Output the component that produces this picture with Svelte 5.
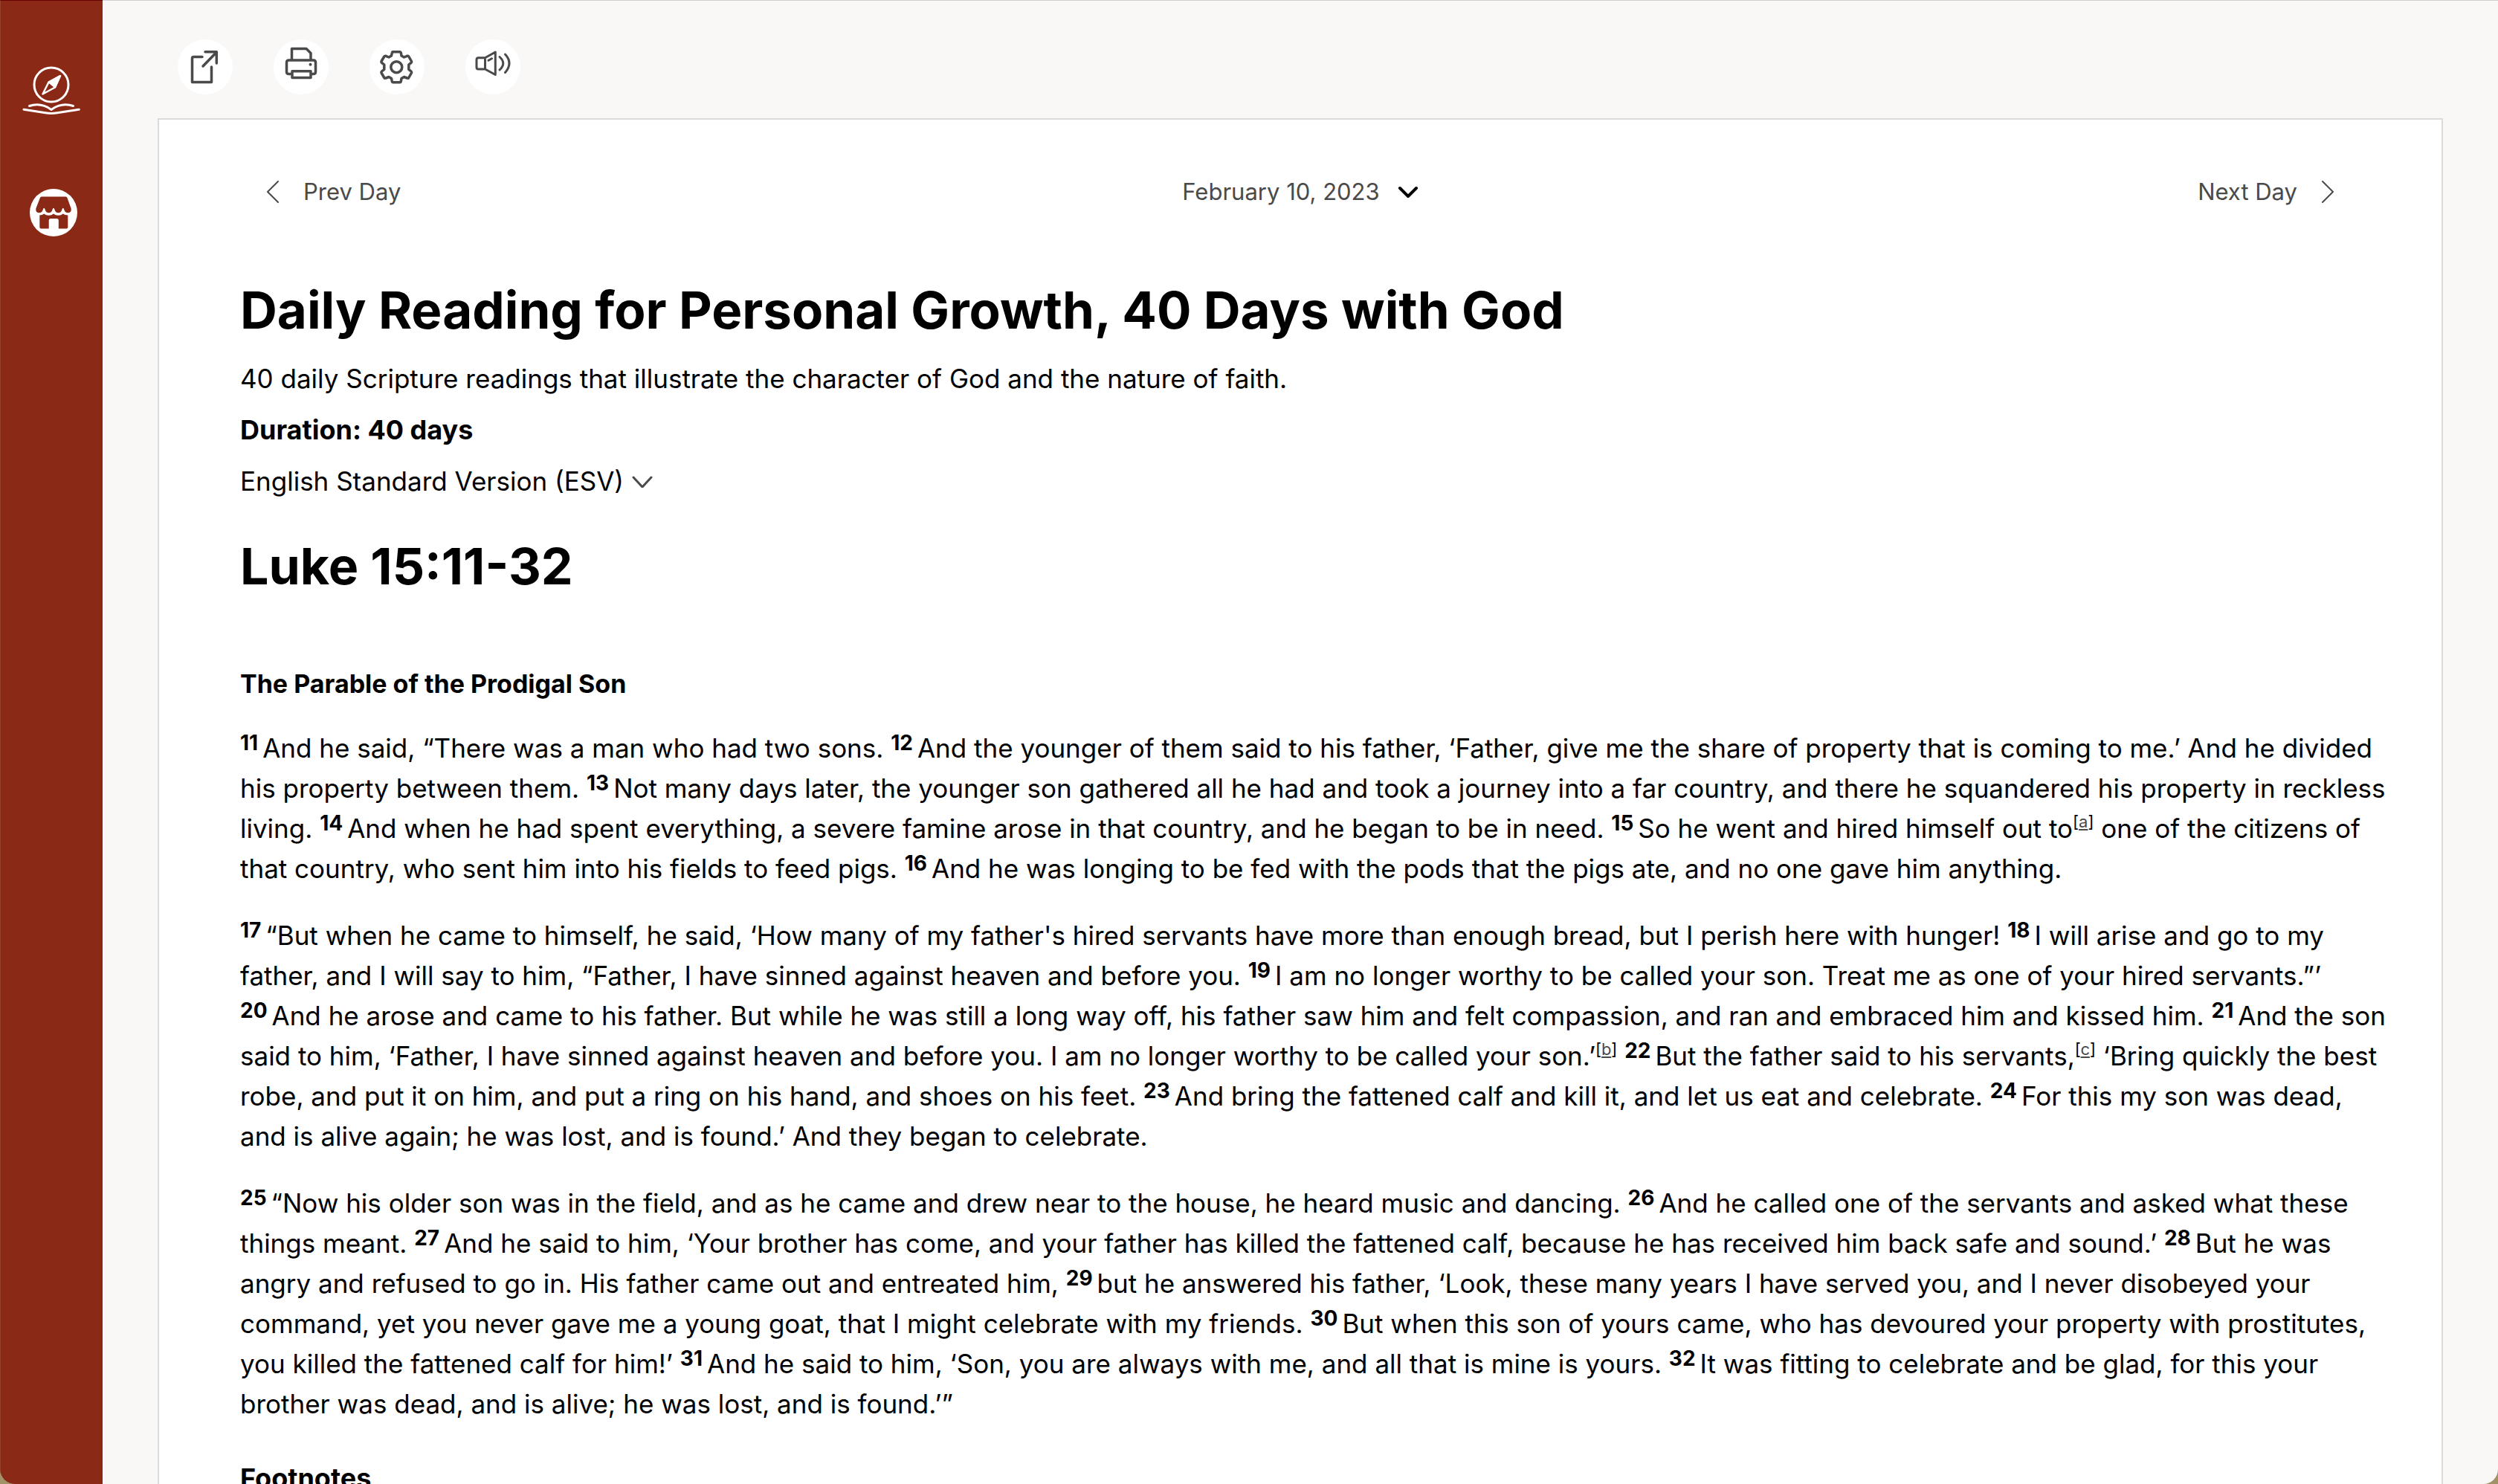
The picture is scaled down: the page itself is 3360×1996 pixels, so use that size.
<script>
  const paragraphs = [
    `{11} And he said, “There was a man who had two sons. {12} And the younger of them said to his father, ‘Father, give me the share of property that is coming to me.’ And he divided his property between them. {13} Not many days later, the younger son gathered all he had and took a journey into a far country, and there he squandered his property in reckless living. {14} And when he had spent everything, a severe famine arose in that country, and he began to be in need. {15} So he went and hired himself out to[a] one of the citizens of that country, who sent him into his fields to feed pigs. {16} And he was longing to be fed with the pods that the pigs ate, and no one gave him anything.`,
    `{17} “But when he came to himself, he said, ‘How many of my father's hired servants have more than enough bread, but I perish here with hunger! {18} I will arise and go to my father, and I will say to him, “Father, I have sinned against heaven and before you. {19} I am no longer worthy to be called your son. Treat me as one of your hired servants.”’ {20} And he arose and came to his father. But while he was still a long way off, his father saw him and felt compassion, and ran and embraced him and kissed him. {21} And the son said to him, ‘Father, I have sinned against heaven and before you. I am no longer worthy to be called your son.’[b] {22} But the father said to his servants,[c] ‘Bring quickly the best robe, and put it on him, and put a ring on his hand, and shoes on his feet. {23} And bring the fattened calf and kill it, and let us eat and celebrate. {24} For this my son was dead, and is alive again; he was lost, and is found.’ And they began to celebrate.`,
    `{25} “Now his older son was in the field, and as he came and drew near to the house, he heard music and dancing. {26} And he called one of the servants and asked what these things meant. {27} And he said to him, ‘Your brother has come, and your father has killed the fattened calf, because he has received him back safe and sound.’ {28} But he was angry and refused to go in. His father came out and entreated him, {29} but he answered his father, ‘Look, these many years I have served you, and I never disobeyed your command, yet you never gave me a young goat, that I might celebrate with my friends. {30} But when this son of yours came, who has devoured your property with prostitutes, you killed the fattened calf for him!’ {31} And he said to him, ‘Son, you are always with me, and all that is mine is yours. {32} It was fitting to celebrate and be glad, for this your brother was dead, and is alive; he was lost, and is found.’”`,
  ];

  // {n} marks a verse number, [x] a footnote reference
  function parse(text) {
    return text
      .split(/(\{\d+\} |\[[a-z]\])/)
      .filter(Boolean)
      .map((part) => {
        if (/^\{\d+\} $/.test(part)) return { kind: 'verse', value: part.slice(1, -2) };
        if (/^\[[a-z]\]$/.test(part)) return { kind: 'note', value: part[1] };
        return { kind: 'text', value: part };
      });
  }

  const passage = paragraphs.map(parse);
</script>

<div class="window">
  <nav class="sidebar" aria-label="Main">
    <a class="side-link" href="#explore" aria-label="Explore">
      <svg viewBox="0 80 138 80" width="138" height="80" fill="none" stroke="#fff" stroke-width="3" stroke-linecap="round" stroke-linejoin="round">
        <circle cx="69" cy="114" r="23" />
        <path d="M81 102 74 117.500 57.500 126.500 65.500 110.500Z" stroke-width="2.500" />
        <path d="M81 102 74 117.500 65.500 110.500Z" fill="#fff" stroke-width="2" />
        <path d="M39.500 142.500C49 139.500 60 141 69 147.500C78 141 89 139.500 98.500 142.500" />
        <path d="M32 147.300 61 151.800Q69 153 77 151.800L106.300 147.300" />
      </svg>
    </a>
    <a class="side-link" href="#store" aria-label="Store">
      <svg viewBox="0 246 138 80" width="138" height="80">
        <circle cx="72" cy="286" r="32" fill="#fff" />
        <path class="store" d="M56.500 264.600H88Q89.800 264.600 90.400 266L95.700 280.500Q96.400 286 91.500 286.300Q87.500 286.300 86.300 282Q84.800 277.500 83.300 282Q82 286.300 78.400 286.300Q74.800 286.300 73.500 282Q72 277.500 70.500 282Q69.200 286.300 65.600 286.300Q62 286.300 60.700 282Q59.200 277.500 57.700 282Q56.500 286.300 52.500 286.300Q47.600 286 48.300 280.500L53.900 266Q54.600 264.600 56.500 264.600Z" />
        <path class="store" d="M53.300 289.500Q57 289.500 59.300 287.500Q61.500 289.700 65.700 289.700Q69.500 289.700 72 287.500Q74.500 289.700 78.400 289.700Q82.500 289.700 84.700 287.500Q87 289.500 91.300 289.500V305Q91.300 307.600 88.700 307.600H78.800V296.500Q78.800 294 76.300 294H68.200Q65.700 294 65.700 296.500V307.600H56Q53.300 307.600 53.300 305Z" />
      </svg>
    </a>
  </nav>

  <main class="main">
    <div class="toolbar" role="toolbar" aria-label="Reading tools">
      <button class="tool" type="button" aria-label="Open in new window">
        <svg viewBox="0 0 74 74" width="74" height="74">
          <path d="M33 23.500H21.500Q19.500 23.500 19.500 25.500V57.500H45.500V37M34 36 51.500 18M37 16.700H52.300V32" />
        </svg>
      </button>
      <button class="tool" type="button" aria-label="Print">
        <svg viewBox="0 0 74 74" width="74" height="74">
          <path d="M24.500 27.500V12.500H44L50 18.500V27.500M25 46.500H20.500Q17.500 46.500 17.500 43.500V31Q17.500 28 20.500 28H53.500Q56.500 28 56.500 31V43.500Q56.500 46.500 53.500 46.500H50M25 42.700H50V51.500H25Z" />
          <circle class="dot" cx="49.500" cy="33.700" r="2" />
        </svg>
      </button>
      <button class="tool" type="button" aria-label="Settings">
        <svg viewBox="0 0 74 74" width="74" height="74">
          <circle cx="36.300" cy="37.300" r="7.500" />
          <path d="M31.500 16.700H41Q42 16.700 42.300 18L43 22 46.500 24 50.500 22.300Q52 22 52.800 23L56.500 29.500Q57 30.500 56 31.300L52.800 34V40.300L56 43Q57 44 56.500 45L52.800 51.500Q52 52.700 50.500 52L46.500 50.500 43 52.500 42.300 56.500Q42 57.700 41 57.700H31.500Q30.500 57.700 30.300 56.500L29.500 52.500 26 50.500 22 52Q20.500 52.700 19.800 51.500L16 45Q15.500 44 16.500 43L19.800 40.300V34L16.500 31.300Q15.500 30.500 16 29.500L19.800 23Q20.500 22 22 22.300L26 24 29.500 22 30.300 18Q30.500 16.700 31.500 16.700Z" />
        </svg>
      </button>
      <button class="tool" type="button" aria-label="Listen">
        <svg class="thin" viewBox="0 0 74 74" width="74" height="74">
          <path d="M26.500 24.700H17.500Q15 24.700 15 27.200V37.500Q15 40 17.500 40H26.500ZM26.500 24.700 40.300 17V47.500L26.500 40M31 28.300 35.500 25.800M46 23.500Q55.500 32 46 41M53.500 20Q64.500 32 53.500 44.500" />
        </svg>
      </button>
    </div>

    <article class="card">
      <div class="day-nav">
        <button class="day" type="button">
          <svg viewBox="0 0 18 32" width="18" height="32"><path d="M16 2 2 16 16 30" /></svg>
          Prev Day
        </button>
        <button class="day date" type="button" aria-haspopup="dialog">
          February 10, 2023
          <svg viewBox="0 0 28 18" width="28" height="18"><path d="M3 4 14 15 25 4" /></svg>
        </button>
        <button class="day next" type="button">
          Next Day
          <svg viewBox="0 0 18 32" width="18" height="32"><path d="M2 2 16 16 2 30" /></svg>
        </button>
      </div>

      <h1>Daily Reading for Personal Growth, 40 Days with God</h1>
      <p class="meta">40 daily Scripture readings that illustrate the character of God and the nature of faith.</p>
      <p class="meta strong">Duration: 40 days</p>
      <div class="meta version">
        <select aria-label="Bible version">
          <option>English Standard Version (ESV)</option>
        </select>
        <svg viewBox="0 0 28 18" width="28" height="18"><path d="M2 4 14 17 26 4" /></svg>
      </div>

      <h2>Luke 15:11-32</h2>
      <h3>The Parable of the Prodigal Son</h3>
      {#each passage as parts}
        <p class="verses">{#each parts as part}{#if part.kind === 'verse'}<sup class="num">{part.value}</sup>{:else if part.kind === 'note'}<sup class="note">[<a href="#note-{part.value}">{part.value}</a>]</sup>{:else}{part.value}{/if}{/each}</p>
      {/each}
      <h4>Footnotes</h4>
    </article>
  </main>
</div>

<style>
  :global(body) {
    background: #a19268;
  }

  .window {
    display: flex;
    height: 100vh;
    overflow: hidden;
    border-radius: 0 0 20px 20px;
    background: #f9f8f6;
    color: #000;
    font-family: Inter, 'Liberation Sans', sans-serif;
    font-size: 35px;
    line-height: 54px;
  }

  .sidebar {
    display: flex;
    flex: none;
    flex-direction: column;
    gap: 86px;
    box-sizing: border-box;
    width: 138px;
    padding-top: 79px;
    border-top: 1px solid #6b0000;
    border-left: 1px solid #98402e;
    background: #8a2a16;
  }

  .side-link {
    display: block;
    height: 80px;
    margin-left: -1px;
  }

  .side-link svg,
  .tool svg {
    display: block;
  }

  .store {
    fill: #8a2a16;
  }

  .main {
    flex: 1;
    min-width: 0;
    padding: 52px 74px 0;
    border-top: 1px solid #d0cfce;
  }

  .toolbar {
    display: flex;
    gap: 55px;
    padding: 0 27px 32px;
  }

  button,
  select {
    padding: 0;
    border: 0;
    background: none;
    color: inherit;
    font: inherit;
    cursor: pointer;
  }

  .tool {
    width: 74px;
    height: 74px;
    border-radius: 50%;
    background: #fff;
  }

  svg {
    flex: none;
    stroke-linecap: round;
    stroke-linejoin: round;
  }

  .tool svg {
    fill: none;
    stroke: #4a4a4a;
    stroke-width: 3.500;
  }

  .tool .thin {
    stroke-width: 3;
  }

  .tool .dot {
    fill: #4a4a4a;
    stroke: none;
  }

  .card {
    padding: 70px 72px 70px 109px;
    border: 2px solid #dcdbd9;
    background: #fff;
  }

  .day-nav {
    display: grid;
    grid-template-columns: 1fr auto 1fr;
    padding: 0 72px 0 35px;
    color: #4a4a4a;
    font-size: 31px;
  }

  .day {
    display: flex;
    align-items: center;
    gap: 32px;
  }

  .day svg {
    fill: none;
    stroke: #4a4a4a;
    stroke-width: 2;
  }

  .day.date {
    gap: 24px;
  }

  .day.date svg {
    stroke: #000;
    stroke-width: 4;
  }

  .next {
    justify-self: end;
  }

  h1,
  h2,
  h3,
  h4,
  p {
    margin: 0;
  }

  h1 {
    margin-top: 82px;
    font-size: 69px;
    line-height: 100px;
  }

  h2 {
    margin-top: 37px;
    font-size: 68px;
    line-height: 100px;
  }

  h3 {
    margin: 82px 0 32px;
    font-size: 34px;
    line-height: 54px;
  }

  .meta {
    margin-top: 15px;
  }

  .strong {
    font-size: 36px;
    font-weight: 700;
  }

  .version {
    display: flex;
    align-items: center;
    gap: 10px;
  }

  .version select {
    appearance: none;
    line-height: 54px;
  }

  .version svg {
    fill: none;
    stroke: #4a4a4a;
    stroke-width: 3;
    pointer-events: none;
  }

  .verses {
    margin-bottom: 36px;
  }

  h4 {
    margin-top: 46px;
    font-size: 36px;
    line-height: 54px;
  }

  sup {
    line-height: 0;
  }

  .num {
    margin-right: 6px;
    font-size: 28px;
    font-weight: 700;
    vertical-align: 10px;
  }

  .note {
    font-size: 22px;
    vertical-align: 14px;
  }

  .note a {
    color: #4a4a4a;
  }
</style>
